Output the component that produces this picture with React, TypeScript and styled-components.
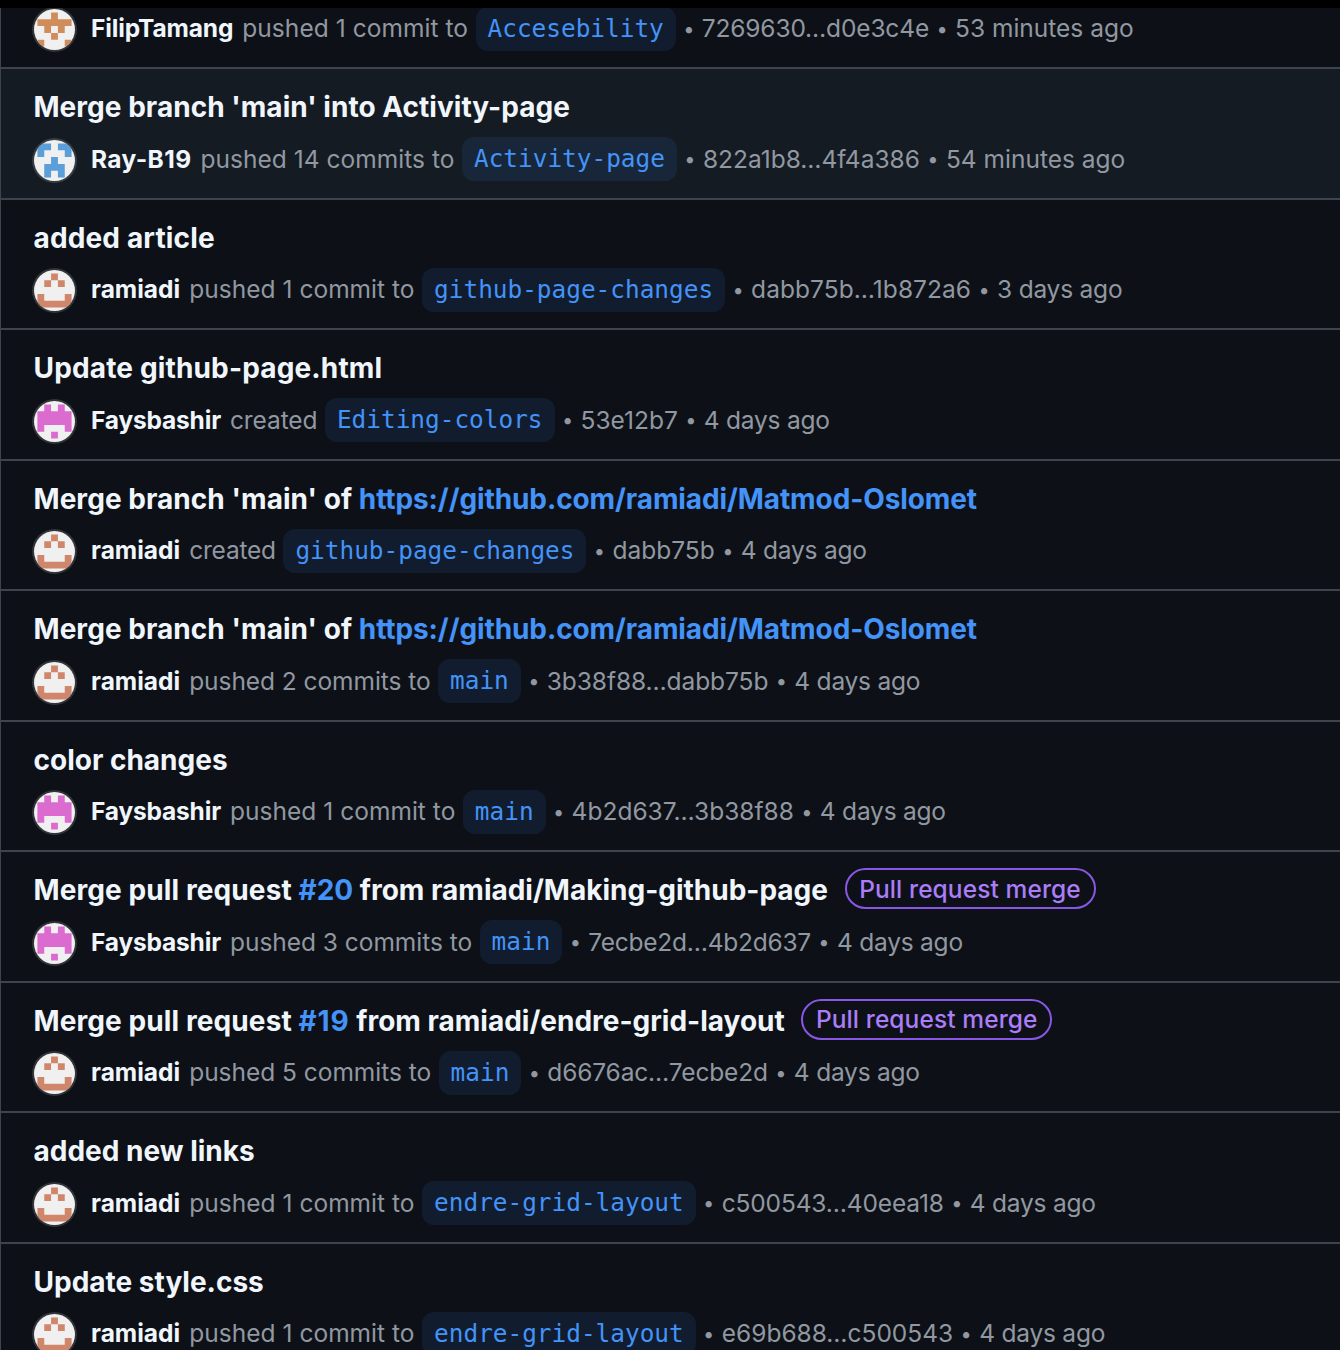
import React from "react";
import styled, { createGlobalStyle } from "styled-components";

const GlobalStyle = createGlobalStyle`
  *, *::before, *::after { box-sizing: border-box; }
  body {
    margin: 0;
    background: #000;
    font-family: Inter, "Noto Sans", sans-serif;
    -webkit-font-smoothing: antialiased;
  }
`;

const Page = styled.main`
  width: 1340px;
  height: 1350px;
  padding-top: 8px;
  overflow: hidden;
  background: #000;
`;

const List = styled.ul`
  list-style: none;
  margin: 0;
  padding: 0;
  height: 1342px;
  overflow: hidden;
  border-left: 1px solid #3d444d;
  background: #0d1117;
`;

const Row = styled.li<{ $active?: boolean; $cut?: boolean }>`
  display: flex;
  flex-direction: column;
  justify-content: flex-end;
  height: ${(p) => (p.$cut ? 59 : 130.5)}px;
  padding: 0 32.5px 16.5px;
  overflow: hidden;
  border-top: ${(p) => (p.$cut ? "0" : "2px solid #3d444d")};
  background: ${(p) => (p.$active ? "#151b23" : "transparent")};
  white-space: pre;
`;

const Title = styled.h4`
  display: flex;
  align-items: center;
  height: 44px;
  margin: 0 0 8px;
  color: #f0f6fc;
  font-size: 28px;
  font-weight: 700;
`;

const TitleText = styled.span<{ $track?: number }>`
  letter-spacing: ${(p) => p.$track ?? 0}px;
`;

const TitleLink = styled.a<{ $track?: number }>`
  color: #4493f8;
  letter-spacing: ${(p) => p.$track ?? 0}px;
`;

const MergeLabel = styled.span`
  display: inline-flex;
  align-items: center;
  justify-content: center;
  width: 251px;
  height: 41px;
  margin: 0 0 3px 16.5px;
  border: 2px solid #8957e5;
  border-radius: 21px;
  color: #ab7df8;
  font-size: 24.5px;
  font-weight: 500;
  letter-spacing: 0.1px;
`;

const Meta = styled.div`
  display: flex;
  align-items: center;
  height: 44px;
  flex: none;
  color: #9198a1;
  font-size: 24.5px;
`;

const Avatar = styled.svg`
  flex: none;
  width: 41px;
  height: 41px;
  margin: 2px 16.5px 0 0;
  border-radius: 50%;
  background: #f0f0f0;
  box-shadow: 0 0 0 2px rgba(255, 255, 255, 0.15);
`;

const User = styled.b<{ $track: number }>`
  margin: -1px 9px 0 0;
  color: #f0f6fc;
  font-size: 24.5px;
  font-weight: 700;
  letter-spacing: ${(p) => p.$track}px;
`;

const Text = styled.span<{ $track?: number }>`
  margin-top: -1px;
  letter-spacing: ${(p) => p.$track ?? 0}px;
`;

const Action = styled(Text)`
  margin-right: 7.5px;
`;

const Branch = styled.a`
  display: flex;
  align-items: center;
  height: 44px;
  padding: 0 12px 1px;
  border-radius: 12px;
  background: rgba(56, 139, 253, 0.1);
  color: #4493f8;
  font-family: "DejaVu Sans Mono", monospace;
  font-size: 24.4px;
`;

const Bullet = styled.span`
  display: flex;
  justify-content: center;
  width: 5px;
  margin: 0 10.5px;
  font-size: 20px;
`;

const profiles = {
  FilipTamang: { track: -0.15, color: "#cf8d5c", cells: ["00100", "11111", "01010", "00100", "10001"] },
  "Ray-B19": { track: 0.4, color: "#5a9fd9", cells: ["11011", "10001", "00100", "01110", "01010"] },
  ramiadi: { track: 0, color: "#cf866a", cells: ["00100", "01010", "00000", "10001", "11111"] },
  Faysbashir: { track: -0.18, color: "#dc6bcf", cells: ["01010", "11111", "11111", "10001", "00100"] },
};

type UserName = keyof typeof profiles;

function Identicon({ user }: { user: UserName }) {
  const { color, cells } = profiles[user];
  const d = cells
    .flatMap((line, y) =>
      [...line].map((c, x) => (c === "1" ? `M${1 + x * 2} ${1 + y * 2}h2v2h-2z` : ""))
    )
    .join("");
  return (
    <Avatar viewBox="0 0 12 12">
      <path d={d} fill={color} />
    </Avatar>
  );
}

interface Entry {
  title?: [string, string?, string?];
  titleTrack?: [number, number?, number?];
  label?: boolean;
  active?: boolean;
  user: UserName;
  action: string;
  actionTrack?: number;
  branch: string;
  sha: string;
  shaTrack?: number;
  time: string;
}

const repo = "https://github.com/ramiadi/Matmod-Oslomet";

const entries: Entry[] = [
  { user: "FilipTamang", action: "pushed 1 commit to", actionTrack: 0.05, branch: "Accesebility", sha: "7269630…d0e3c4e", shaTrack: -0.15, time: "53 minutes ago" },
  { title: ["Merge branch 'main' into Activity-page"], titleTrack: [0.03], active: true, user: "Ray-B19", action: "pushed 14 commits to", actionTrack: 0.03, branch: "Activity-page", sha: "822a1b8…4f4a386", time: "54 minutes ago" },
  { title: ["added article"], titleTrack: [0.15], user: "ramiadi", action: "pushed 1 commit to", actionTrack: 0.03, branch: "github-page-changes", sha: "dabb75b…1b872a6", shaTrack: 0.05, time: "3 days ago" },
  { title: ["Update github-page.html"], titleTrack: [0.15], user: "Faysbashir", action: "created", actionTrack: -0.1, branch: "Editing-colors", sha: "53e12b7", time: "4 days ago" },
  { title: ["Merge branch 'main' of ", repo], titleTrack: [0.05, -0.1], user: "ramiadi", action: "created", actionTrack: -0.2, branch: "github-page-changes", sha: "dabb75b", time: "4 days ago" },
  { title: ["Merge branch 'main' of ", repo], titleTrack: [0.05, -0.1], user: "ramiadi", action: "pushed 2 commits to", actionTrack: -0.06, branch: "main", sha: "3b38f88…dabb75b", shaTrack: -0.08, time: "4 days ago" },
  { title: ["color changes"], user: "Faysbashir", action: "pushed 1 commit to", actionTrack: 0.03, branch: "main", sha: "4b2d637…3b38f88", time: "4 days ago" },
  { title: ["Merge pull request ", "#20", " from ramiadi/Making-github-page"], titleTrack: [0.1], label: true, user: "Faysbashir", action: "pushed 3 commits to", actionTrack: -0.03, branch: "main", sha: "7ecbe2d…4b2d637", shaTrack: -0.25, time: "4 days ago" },
  { title: ["Merge pull request ", "#19", " from ramiadi/endre-grid-layout"], titleTrack: [0.1, 0.9], label: true, user: "ramiadi", action: "pushed 5 commits to", actionTrack: -0.03, branch: "main", sha: "d6676ac…7ecbe2d", shaTrack: -0.15, time: "4 days ago" },
  { title: ["added new links"], user: "ramiadi", action: "pushed 1 commit to", actionTrack: 0.03, branch: "endre-grid-layout", sha: "c500543…40eea18", shaTrack: -0.15, time: "4 days ago" },
  { title: ["Update style.css"], user: "ramiadi", action: "pushed 1 commit to", actionTrack: 0.03, branch: "endre-grid-layout", sha: "e69b688…c500543", time: "4 days ago" },
];

export default function App() {
  return (
    <Page>
      <GlobalStyle />
      <List>
        {entries.map((e, i) => (
          <Row key={i} $active={e.active} $cut={!e.title}>
            {e.title && (
              <Title>
                <TitleText $track={e.titleTrack?.[0]}>{e.title[0]}</TitleText>
                {e.title[1] && <TitleLink $track={e.titleTrack?.[1]}>{e.title[1]}</TitleLink>}
                {e.title[2] && <TitleText $track={e.titleTrack?.[2]}>{e.title[2]}</TitleText>}
                {e.label && <MergeLabel>Pull request merge</MergeLabel>}
              </Title>
            )}
            <Meta>
              <Identicon user={e.user} />
              <User $track={profiles[e.user].track}>{e.user}</User>
              <Action $track={e.actionTrack}>{e.action}</Action>
              <Branch>{e.branch}</Branch>
              <Bullet>•</Bullet>
              <Text $track={e.shaTrack}>{e.sha}</Text>
              <Bullet>•</Bullet>
              <Text $track={e.time.includes("days") ? -0.22 : 0}>{e.time}</Text>
            </Meta>
          </Row>
        ))}
      </List>
    </Page>
  );
}
